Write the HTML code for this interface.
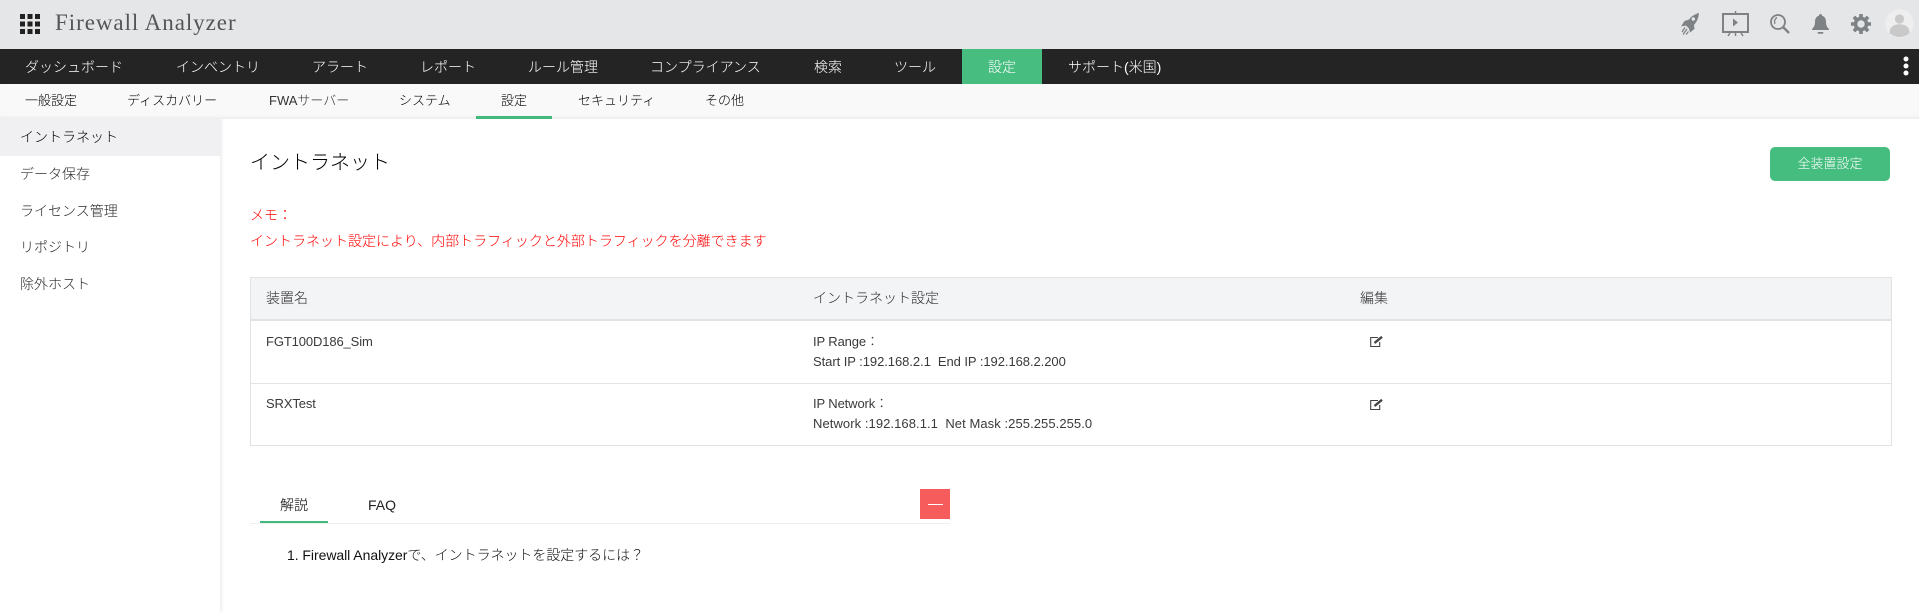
<!DOCTYPE html>
<html lang="ja"><head><meta charset="utf-8"><title>Firewall Analyzer</title>
<style>
html,body{margin:0;padding:0;background:#fff}
#p{position:relative;width:1919px;height:612px;overflow:hidden;background:#fff;font-family:"Liberation Sans","Noto Sans CJK JP",sans-serif;font-size:14px;color:#222;font-weight:300}
#p div,#p span.a{position:absolute;white-space:nowrap}
.t{line-height:20px;transform:translateY(-10px)}
.n{color:#fff;font-size:14px}
.s{color:#000;font-size:13px}
.m{color:#2c2c2c;font-size:14px;left:20px}
.d{color:#3a3a3a;font-size:13px;letter-spacing:-.12px}
svg{position:absolute;overflow:visible}
</style></head><body><div id="p">
<div style="left:0;top:0;width:1919px;height:49px;background:#e5e6e8"></div>
<svg style="left:20px;top:14px" width="20" height="20" viewBox="0 0 20 20" fill="#222"><rect x="0" y="0" width="5" height="5"/><rect x="7.5" y="0" width="5" height="5"/><rect x="15" y="0" width="5" height="5"/><rect x="0" y="7.5" width="5" height="5"/><rect x="7.5" y="7.5" width="5" height="5"/><rect x="15" y="7.5" width="5" height="5"/><rect x="0" y="15" width="5" height="5"/><rect x="7.5" y="15" width="5" height="5"/><rect x="15" y="15" width="5" height="5"/></svg>
<div class="t" style="left:55px;top:23px;font-family:'Liberation Serif',serif;font-size:23px;letter-spacing:.95px;color:#555;line-height:24px;transform:translateY(-12px)">Firewall Analyzer</div>
<svg style="left:1681px;top:13px" width="18" height="22" viewBox="0 0 18 22" fill="#7f8284"><path d="M18 0C17.500 5 16 8.500 13 12L13.500 16 9 19.500 8 15.500 5 12.500 0 13.500 3.500 8 8 6.500C10.500 3 14 1 18 0Z"/><circle cx="12.300" cy="6" r="1.700" fill="#e5e6e8"/><path d="M4 14.500L1 19M6 16L2 21.500M7.500 18.500L5 21.500" stroke="#7f8284" stroke-width="1.300" fill="none"/></svg>
<svg style="left:1722px;top:11px" width="27" height="25" viewBox="0 0 27 25" fill="none" stroke="#7f8284"><path d="M1 3h25v18H1z" stroke-width="2"/><path d="M13.500 0v3M13.500 21v4M8 22l-2 3M19 22l2 3" stroke-width="1.500"/><path d="M11 7.500l5 4-5 4z" fill="#7f8284" stroke="none"/></svg>
<svg style="left:1770px;top:14px" width="20" height="20" viewBox="0 0 20 20" fill="none" stroke="#7f8284"><circle cx="8" cy="8" r="7" stroke-width="1.800"/><path d="M13 13l6 6" stroke-width="2.400"/><path d="M7 3.500A5 5 0 0 0 5 10" stroke-width="1.300"/></svg>
<svg style="left:1812px;top:14px" width="17" height="20" viewBox="0 0 17 20" fill="#7f8284"><path d="M8.500 0a1.500 1.500 0 0 1 1.500 1.700C13 2.500 14 5 14 8c0 3 .8 5 3 7v1H0v-1c2.200-2 3-4 3-7 0-3 1-5.500 4-6.300A1.500 1.500 0 0 1 8.500 0Z"/><rect x="5.500" y="18" width="6" height="1.800" rx=".9"/></svg>
<svg style="left:1851px;top:14px" width="20" height="20" viewBox="0 0 20 20"><circle cx="10" cy="10" r="5.500" fill="none" stroke="#7f8284" stroke-width="3.600"/><g stroke="#7f8284" stroke-width="3.600"><path d="M10 0v4M10 16v4M0 10h4M16 10h4M2.900 2.900l2.900 2.900M14.200 14.200l2.900 2.900M17.100 2.900l-2.900 2.900M5.800 14.200l-2.900 2.900"/></g></svg>
<svg style="left:1885px;top:9px" width="29" height="29" viewBox="0 0 29 29"><circle cx="14.500" cy="14.500" r="14.300" fill="#eeeeef"/><circle cx="14.500" cy="10" r="4.600" fill="#c9c9c9"/><path d="M4.500 24c0-6 4-8.800 10-8.800s10 2.800 10 8.800a14.300 14.300 0 0 1-20 0Z" fill="#c9c9c9"/></svg>

<div style="left:0;top:49px;width:1919px;height:35px;background:#242424"></div>
<div style="left:962px;top:49px;width:80px;height:35px;background:#47bd80"></div>
<div class="t n" style="left:25px;top:67px">ダッシュボード</div>
<div class="t n" style="left:176px;top:67px">インベントリ</div>
<div class="t n" style="left:312px;top:67px">アラート</div>
<div class="t n" style="left:420px;top:67px">レポート</div>
<div class="t n" style="left:528px;top:67px">ルール管理</div>
<div class="t n" style="left:650px;top:67px">コンプライアンス</div>
<div class="t n" style="left:814px;top:67px">検索</div>
<div class="t n" style="left:894px;top:67px">ツール</div>
<div class="t n" style="left:988px;top:67px">設定</div>
<div class="t n" style="left:1068px;top:67px">サポート(米国)</div>
<svg style="left:1903px;top:56px" width="6" height="20" viewBox="0 0 6 20" fill="#fff"><circle cx="3" cy="3" r="2.500"/><circle cx="3" cy="10" r="2.500"/><circle cx="3" cy="17" r="2.500"/></svg>

<div style="left:0;top:84px;width:1919px;height:35px;background:#f9f9f9;box-shadow:inset 0 -4px 4px -3px #e6e6e6"></div>
<div class="t s" style="left:25px;top:101px">一般設定</div>
<div class="t s" style="left:127px;top:101px">ディスカバリー</div>
<div class="t s" style="left:269px;top:101px;color:#333">FWAサーバー</div>
<div class="t s" style="left:399px;top:101px">システム</div>
<div class="t s" style="left:501px;top:101px">設定</div>
<div class="t s" style="left:578px;top:101px">セキュリティ</div>
<div class="t s" style="left:705px;top:101px">その他</div>
<div style="left:476px;top:116px;width:76px;height:3px;background:#44b97c"></div>

<div style="left:0;top:119px;width:220px;height:493px;background:#fff;box-shadow:2px 0 3px #eee"></div>
<div style="left:0;top:119px;width:220px;height:37px;background:#f0f0f2"></div>
<div class="t m" style="top:137px;color:#000">イントラネット</div>
<div class="t m" style="top:174px">データ保存</div>
<div class="t m" style="top:211px">ライセンス管理</div>
<div class="t m" style="top:247px">リポジトリ</div>
<div class="t m" style="top:284px">除外ホスト</div>

<div class="t" style="left:250px;top:163px;font-size:20px;color:#000;line-height:28px;transform:translateY(-14px)">イントラネット</div>
<div style="left:1770px;top:147px;width:120px;height:34px;background:#44bd7f;border-radius:5px;color:#fff;font-size:13px;line-height:33px;text-align:center">全装置設定</div>
<div class="t" style="left:250px;top:215px;color:#f00">メモ：</div>
<div class="t" style="left:250px;top:241px;color:#f00">イントラネット設定により、内部トラフィックと外部トラフィックを分離できます</div>

<div style="left:250px;top:277px;width:1640px;height:167px;border:1px solid #e2e2e2"></div>
<div style="left:251px;top:278px;width:1640px;height:41px;background:#f3f4f6;border-bottom:2px solid #e2e2e2"></div>
<div style="left:251px;top:383px;width:1640px;height:1px;background:#e4e4e4"></div>
<div class="t" style="left:266px;top:298px;color:#2c2c2c">装置名</div>
<div class="t" style="left:813px;top:298px;color:#2c2c2c">イントラネット設定</div>
<div class="t" style="left:1360px;top:298px;color:#2c2c2c">編集</div>
<div class="t d" style="left:266px;top:342px">FGT100D186_Sim</div>
<div class="t d" style="left:813px;top:342px">IP Range：</div>
<div class="t d" style="left:813px;top:362px;letter-spacing:-.06px">Start IP :192.168.2.1&nbsp; End IP :192.168.2.200</div>
<div class="t d" style="left:266px;top:404px">SRXTest</div>
<div class="t d" style="left:813px;top:404px">IP Network：</div>
<div class="t d" style="left:813px;top:424px;letter-spacing:.07px">Network :192.168.1.1&nbsp; Net Mask :255.255.255.0</div>
<svg style="left:1370px;top:336px" width="13" height="11" viewBox="0 0 13 11" fill="none" stroke="#444"><path d="M8 1.500H.7v9h9V6" stroke-width="1.100"/><path d="M4.500 7L12 .8" stroke-width="2.400"/></svg>
<svg style="left:1370px;top:399px" width="13" height="11" viewBox="0 0 13 11" fill="none" stroke="#444"><path d="M8 1.500H.7v9h9V6" stroke-width="1.100"/><path d="M4.500 7L12 .8" stroke-width="2.400"/></svg>

<div class="t" style="left:280px;top:505px;color:#000">解説</div>
<div class="t" style="left:368px;top:505px;color:#222">FAQ</div>
<div style="left:250px;top:523px;width:700px;height:1px;background:#eee"></div>
<div style="left:260px;top:521px;width:68px;height:2px;background:#44b97c"></div>
<div style="left:920px;top:489px;width:30px;height:30px;background:#f75c5c"></div>
<div style="left:928px;top:504px;width:15px;height:1px;background:#fff"></div>
<div class="t" style="left:287px;top:555px;color:#111;font-size:14px;letter-spacing:-.05px">1. Firewall Analyzerで、イントラネットを設定するには？</div>
</div></body></html>
